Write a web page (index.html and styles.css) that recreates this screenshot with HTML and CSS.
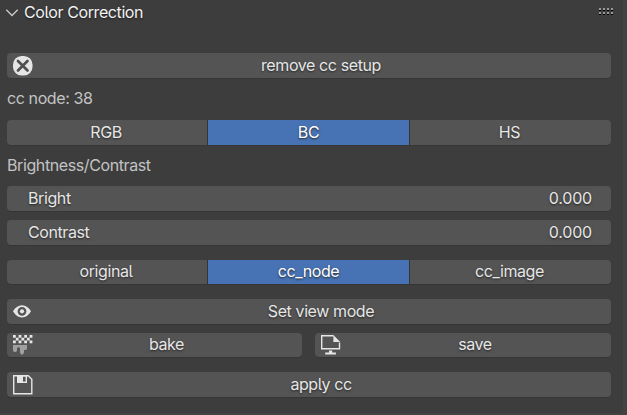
FILE: index.html
```html
<!DOCTYPE html>
<html lang="en">
<head>
<meta charset="utf-8">
<title>Color Correction</title>
<link rel="stylesheet" href="styles.css">
</head>
<body>
<main class="panel">
  <header class="header">
    <svg class="chevron" width="14" height="10" viewBox="0 0 14 10"><path d="M1.3 1.8 7 7.6l5.7-5.8" fill="none" stroke="#c8c8c8" stroke-width="1.4"/></svg>
    <h1 class="title">Color Correction</h1>
    <svg class="grip" width="14" height="7" viewBox="0 0 14 7" shape-rendering="crispEdges">
      <path fill="#000" d="M0 2h2v1H0zM4 2h2v1H4zM8 2h2v1H8zM12 2h2v1h-2zM0 6h2v1H0zM4 6h2v1H4zM8 6h2v1H8zM12 6h2v1h-2z"/>
      <path fill="#989898" d="M0 0h2v2H0zM4 0h2v2H4zM8 0h2v2H8zM12 0h2v2h-2zM0 4h2v2H0zM4 4h2v2H4zM8 4h2v2H8zM12 4h2v2h-2z"/>
    </svg>
  </header>
  <button class="button remove">
    <svg class="icon" width="20" height="20" viewBox="0 0 20 20"><rect x="0" y="0" width="19.5" height="19.5" rx="8.6" fill="#e6e6e6"/><path d="m5 5 9.500 9.500M14.500 5 5 14.500" stroke="#505050" stroke-width="2.700" stroke-linecap="round"/></svg>
    <span>remove cc setup</span>
  </button>
  <p class="label node">cc node: 38</p>
  <div class="tabs mode">
    <button class="tab">RGB</button><button class="tab active">BC</button><button class="tab">HS</button>
  </div>
  <p class="label section">Brightness/Contrast</p>
  <div class="field bright"><span>Bright</span><span class="value">0.000</span></div>
  <div class="field contrast"><span>Contrast</span><span class="value">0.000</span></div>
  <div class="tabs source">
    <button class="tab">original</button><button class="tab active">cc_node</button><button class="tab">cc_image</button>
  </div>
  <button class="button view">
    <svg class="icon" width="20" height="20" viewBox="0 0 20 20"><path fill="#e6e6e6" fill-rule="evenodd" d="M0 9.200C2.100 5.800 5.200 3.300 9 3.300s6.900 2.500 9 5.900c-2.100 3.700-5.200 6.200-9 6.200S2.100 12.900 0 9.200ZM9 4.900a4.400 4.400 0 1 0 0 8.800 4.400 4.400 0 0 0 0-8.800Z"/><circle cx="9" cy="9.300" r="2.100" fill="#e6e6e6"/></svg>
    <span>Set view mode</span>
  </button>
  <div class="pair">
    <button class="button short">
      <svg class="icon" width="20" height="20" viewBox="0 0 20 20"><path fill="#e6e6e6" d="M0 0h2.800v2.800H0zM5.600 0h2.800v2.800H5.600zM11.200 0H14v2.800h-2.800zM16.600 0h2.800v2.800h-2.800zM2.800 2.800h2.800v2.800H2.800zM8.400 2.800h2.800v2.800H8.400zM14 2.800h2.700v2.800H14zM0 5.600h2.800v2.700H0zM5.600 5.600h2.800v2.700H5.600zM11.200 5.600H14v2.700h-2.800zM16.600 5.600h2.800v2.700h-2.800z"/><path fill="#a0a0a0" d="M0 10h14v3.600q-.3 1.500-1.600 1.500T11 14.800v2.500q-.3 2.400-2 2.400t-2-2.400v-3.900q-.1-1.100-1.500-1.100T4 13.400v2.100q-.3 1.600-2 1.600t-2-1.600z"/></svg>
      <span>bake</span>
    </button>
    <button class="button short">
      <svg class="icon" width="20" height="20" viewBox="0 0 20 20"><path d="M12.500.7H.7v13h17.800V7.500" fill="none" stroke="#e6e6e6" stroke-width="1.400"/><path fill="#e6e6e6" d="M12.400 0 19.200 7h-6.800zM8 15.500h3.200v2h3.700v1.900H4.200v-1.900H8z"/></svg>
      <span>save</span>
    </button>
  </div>
  <button class="button apply">
    <svg class="icon" width="20" height="20" viewBox="0 0 20 20"><path d="M.7.7h14.600l3.500 3.600v14.400H.7z" fill="none" stroke="#e6e6e6" stroke-width="1.400"/><path fill="#e6e6e6" fill-rule="evenodd" d="M4 0h10v8H4zM10 1.500v5h2.600v-5z"/></svg>
    <span>apply cc</span>
  </button>
</main>
</body>
</html>
```

FILE: styles.css
```css
* { box-sizing: border-box; }
body {
  margin: 0;
  height: 415px;
  overflow: hidden;
  background: #424242;
  font: 16px/24px Inter, sans-serif;
  font-feature-settings: "cv05" 1;
  letter-spacing: -0.4px;
  color: #e6e6e6;
}
.panel {
  display: flex;
  flex-direction: column;
  width: 623px;
  height: 413px;
  padding: 0 12px 0 7px;
  background: #3d3d3d;
  border-radius: 0 0 4px 0;
}
.header {
  display: flex;
  align-items: flex-start;
  height: 25px;
  margin: 0 -2px 28px -2px;
}
.chevron { margin-top: 8px; }
.title {
  flex: 1;
  margin: 0 0 0 5px;
  font-size: 16px;
  font-weight: 400;
  color: #f2f2f2;
  text-shadow: 0 1px 2px #1c1c1c;
}
.grip { margin-top: 8px; }
.button, .tab, .field {
  font: inherit;
  letter-spacing: inherit;
  font-feature-settings: inherit;
  color: inherit;
  height: 25px;
  border: 0;
  padding: 0;
  background: #545454;
  text-shadow: 0 1px 2px #252525;
}
.button, .field, .tabs {
  flex: none;
  border-radius: 4px;
  box-shadow: 0 1px 0 #363636;
}
.button {
  display: grid;
  grid-template-columns: 22px 1fr;
  padding: 0 0 0 6px;
}
.button span { padding-right: 4px; text-align: center; }
.icon { margin-top: 3px; }
.label {
  margin: 0;
  height: 24px;
  color: #c3c3c3;
}
.node { margin-top: 8px; }
.tabs {
  display: grid;
  grid-template-columns: 200px 201px 1fr;
  gap: 1px;
  overflow: hidden;
  background: #343434;
}
.tab { padding: 0 2px 2px 0; }
.tab.active { padding-right: 0; background: #4772b3; color: #fff; }
.mode { margin-top: 10px; }
.section { margin-top: 8px; }
.field {
  display: flex;
  justify-content: space-between;
  padding: 0 19px 0 21px;
}
.value { letter-spacing: -0.2px; }
.bright { margin-top: 9px; }
.contrast { margin-top: 9px; }
.source { margin-top: 15px; }
.source, .source .tab, .short { height: 24px; }
.source .tab { line-height: 22px; }
.view { margin-top: 15px; }
.pair {
  display: grid;
  grid-template-columns: 295px 296px;
  gap: 13px;
  margin-top: 9px;
}
.short { line-height: 22px; }
.short .icon { margin-top: 2px; }
.apply { margin-top: 15px; }
```
